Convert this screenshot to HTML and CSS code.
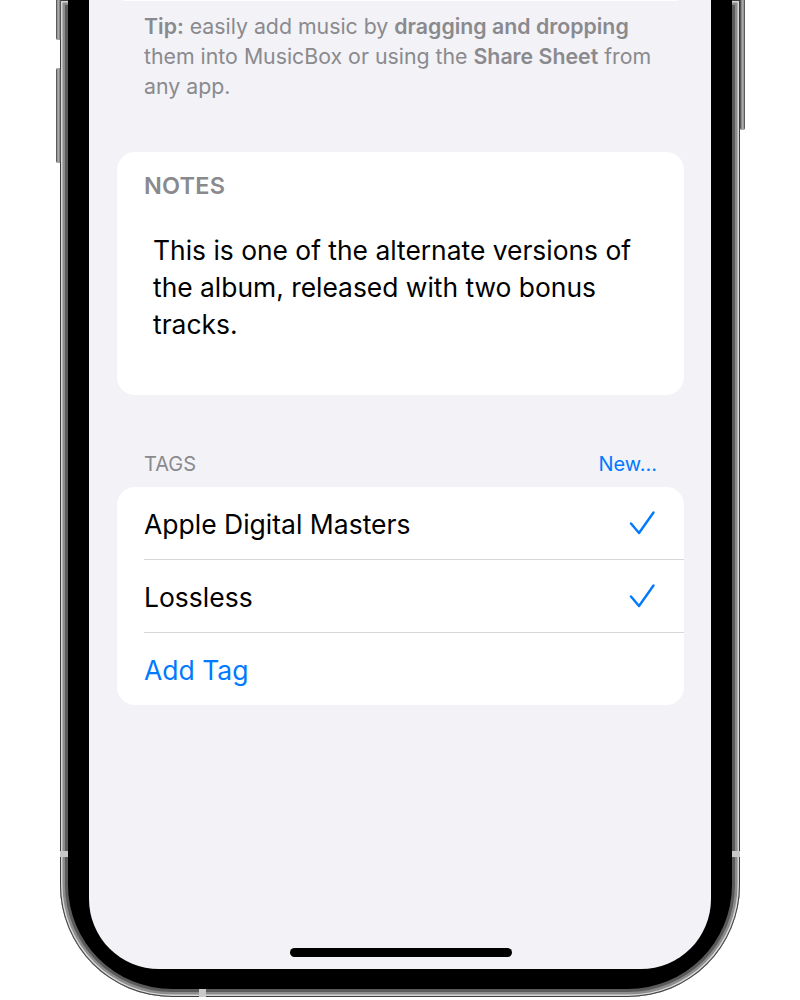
FILE: index.html
```html
<!DOCTYPE html>
<html lang="en">
<head>
<meta charset="utf-8">
<title>MusicBox – Album Notes and Tags</title>
<link rel="stylesheet" href="styles.css">
</head>
<body>
<div class="phone">
  <span class="btn btn-left-1"></span>
  <span class="btn btn-left-2"></span>
  <span class="btn btn-right-1"></span>
  <span class="antenna antenna-left"></span>
  <span class="antenna antenna-right"></span>
  <span class="antenna antenna-bottom"></span>
  <div class="bezel">
    <div class="screen">
      <div class="card card-prev"></div>
      <p class="tip"><b>Tip:</b> easily add music by <b>dragging and dropping</b> them into MusicBox or using the <b>Share Sheet</b> from any app.</p>

      <section class="card notes">
        <h2 class="notes-title">NOTES</h2>
        <p class="notes-body">This is one of the alternate versions of the album, released with two bonus tracks.</p>
      </section>

      <div class="section-header">
        <span class="section-title">TAGS</span>
        <span class="link">New...</span>
      </div>
      <ul class="card list">
        <li class="row"><div class="row-inner"><span class="row-label">Apple Digital Masters</span>
          <svg class="check" viewBox="0 0 26 26" width="26" height="26"><path d="M2 13.5 L10 23 L24.5 2.5" fill="none" stroke="#007aff" stroke-width="2.4" stroke-linecap="round" stroke-linejoin="round"/></svg></div></li>
        <li class="row"><div class="row-inner"><span class="row-label">Lossless</span>
          <svg class="check" viewBox="0 0 26 26" width="26" height="26"><path d="M2 13.5 L10 23 L24.5 2.5" fill="none" stroke="#007aff" stroke-width="2.4" stroke-linecap="round" stroke-linejoin="round"/></svg></div></li>
        <li class="row"><div class="row-inner"><span class="row-label link">Add Tag</span></div></li>
      </ul>

      <div class="home-indicator"></div>
    </div>
  </div>
</div>
</body>
</html>
```
FILE: styles.css
```css
* { box-sizing: border-box; }
html, body { margin: 0; padding: 0; background: #ffffff; }
body {
  font-family: Inter, "Noto Sans", "Liberation Sans", sans-serif;
  overflow: hidden;
  height: 1000px;
}

.phone {
  position: relative;
  margin-left: 60px;
  width: 680px;
  height: 997px;
  padding: 0 8px 8px 8px;
  background: #5a5a5a;
  border-radius: 0 0 112px 112px;
  box-shadow: inset 0 0 0 1px #3e3e3e, inset 0 0 0 2.5px #d6d6d6, inset 0 0 0 5px #8c8c8c;
}

.btn {
  position: absolute;
  width: 5px;
  background: linear-gradient(90deg, #3a3a3a, #b9b9b9 40%, #8a8a8a 70%, #3a3a3a);
  border-radius: 2px;
}
.btn-left-1 { left: -4px; top: -4px; height: 44px; }
.btn-left-2 { left: -4px; top: 68px; height: 95px; }
.btn-right-1 { right: -5px; top: -4px; height: 134px; background: linear-gradient(90deg, #3a3a3a, #8a8a8a 30%, #b9b9b9 60%, #3a3a3a); }

.antenna {
  position: absolute;
  background: #c9c9c9;
}
.antenna-left { left: 0; top: 851px; width: 8px; height: 6px; }
.antenna-right { right: 0; top: 851px; width: 8px; height: 6px; }
.antenna-bottom { left: 139px; bottom: 0; width: 7px; height: 8px; }

.bezel {
  height: 100%;
  background: #000;
  padding: 0 21px 20px 21px;
  border-radius: 0 0 104px 104px;
}

.screen {
  height: 969px;
  background: #f2f2f7;
  border-radius: 0 0 70px 70px;
  padding: 0 27px 12px 28px;
  display: flex;
  flex-direction: column;
  overflow: hidden;
}

.card {
  background: #ffffff;
  border-radius: 18px;
}

.card-prev {
  height: 18px;
  margin-top: -17px;
  flex: none;
}

.tip {
  margin: 10px 0 0 0;
  padding: 0 27px;
  font-size: 21.3px;
  line-height: 30px;
  color: #8a8a8e;
}
.tip b { font-weight: 600; }

.notes {
  margin-top: 51px;
  padding: 20px 27px 52px 27px;
}
.notes-title {
  margin: 0;
  font-size: 23.5px;
  line-height: 28px;
  font-weight: 600;
  color: #8a8a8e;
  letter-spacing: 0.2px;
}
.notes-body {
  margin: 32px 0 0 9px;
  font-size: 26.4px;
  line-height: 37px;
  color: #000;
}

.section-header {
  margin-top: 57px;
  padding: 0 27px;
  display: flex;
  justify-content: space-between;
  align-items: baseline;
  font-size: 20px;
  line-height: 24px;
}
.section-title { color: #8a8a8e; }
.link { color: #007aff; }

.list {
  list-style: none;
  margin: 11px 0 0 0;
  padding: 0;
}
.row {
  padding-left: 27px;
}
.row-inner {
  height: 73px;
  padding-right: 27px;
  display: flex;
  align-items: center;
  justify-content: space-between;
  border-top: 1px solid #d8d8dc;
}
.row:first-child .row-inner { border-top: 0; height: 72px; }
.row-label {
  font-size: 26.5px;
  line-height: 32px;
  padding-top: 2px;
}
.check { display: block; margin-right: 2px; }

.home-indicator {
  margin-top: auto;
  align-self: center;
  width: 222px;
  height: 9px;
  border-radius: 5px;
  background: #000;
  flex: none;
}
```
